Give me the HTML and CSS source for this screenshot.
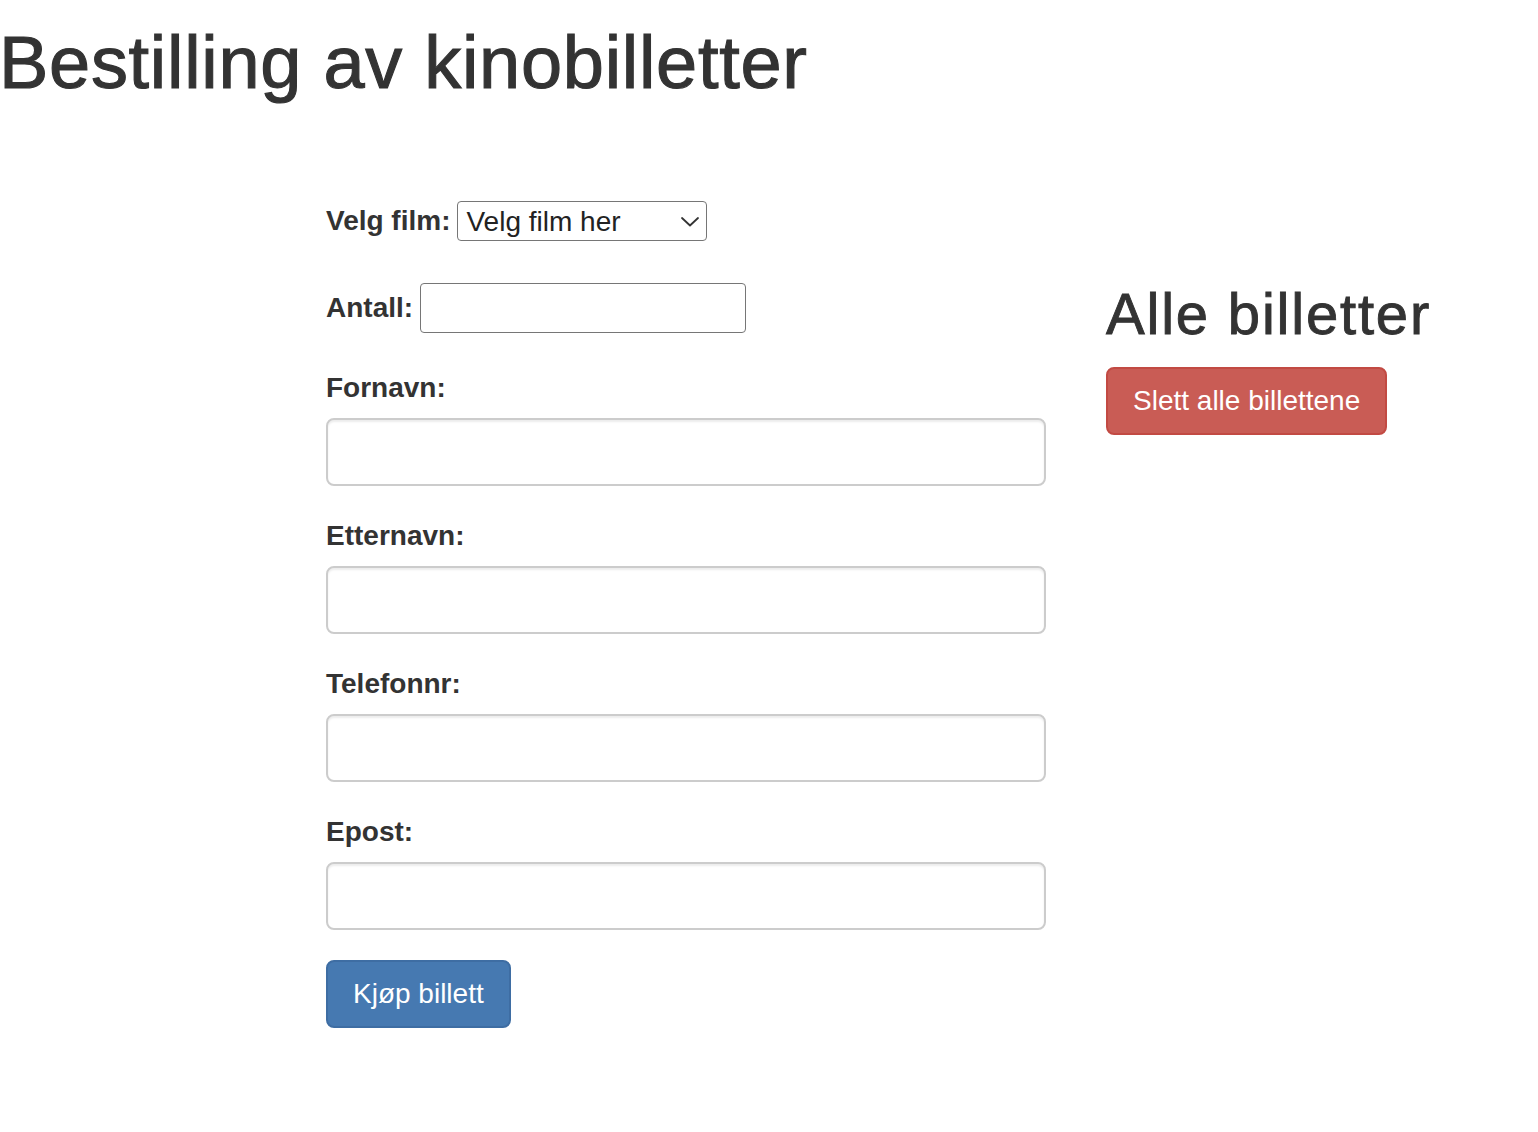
FILE: index.html
```html
<!DOCTYPE html>
<html lang="no">
<head>
<meta charset="utf-8">
<title>Bestilling av kinobilletter</title>
<link rel="stylesheet" href="styles.css">
</head>
<body>
<h1 class="title">Bestilling av kinobilletter</h1>
<div class="layout">
  <form class="order">
    <div class="inline-row row-film">
      <label class="inline-label" for="film">Velg film:</label>
      <div class="select-wrap">
        <select id="film" class="film-select">
          <option>Velg film her</option>
        </select>
        <svg class="chevron" width="18" height="10" viewBox="0 0 18 10" aria-hidden="true">
          <path d="M1 1 L9 8.5 L17 1" fill="none" stroke="#333" stroke-width="1.8" stroke-linecap="round" stroke-linejoin="round"/>
        </svg>
      </div>
    </div>
    <div class="inline-row row-antall">
      <label class="inline-label" for="antall">Antall:</label>
      <input id="antall" class="small-input" type="text">
    </div>
    <div class="group">
      <label for="fornavn">Fornavn:</label>
      <input id="fornavn" class="form-control" type="text">
    </div>
    <div class="group">
      <label for="etternavn">Etternavn:</label>
      <input id="etternavn" class="form-control" type="text">
    </div>
    <div class="group">
      <label for="telefonnr">Telefonnr:</label>
      <input id="telefonnr" class="form-control" type="text">
    </div>
    <div class="group">
      <label for="epost">Epost:</label>
      <input id="epost" class="form-control" type="text">
    </div>
    <button type="button" class="btn btn-primary">Kjøp billett</button>
  </form>
  <aside class="tickets">
    <h2 class="tickets-title">Alle billetter</h2>
    <button type="button" class="btn btn-danger">Slett alle billettene</button>
  </aside>
</div>
</body>
</html>
```
FILE: styles.css
```css
* { box-sizing: border-box; }

html, body {
  margin: 0;
  padding: 0;
  background: #fff;
}

body {
  font-family: "Liberation Sans", Arial, Helvetica, sans-serif;
  color: #333;
  font-size: 28px;
  line-height: 40px;
}

.title {
  margin: 23px 0 0 -1px;
  font-size: 74px;
  line-height: 79px;
  font-weight: 500;
  letter-spacing: 0.7px;
  -webkit-text-stroke: 1.1px #333;
}

.layout {
  display: flex;
  align-items: flex-start;
  gap: 60px;
  padding-left: 326px;
  margin-top: 99px;
}

.order {
  width: 720px;
  display: flex;
  flex-direction: column;
  align-items: flex-start;
}

.inline-row {
  display: flex;
  align-items: center;
  gap: 7px;
}

.inline-label, .group label {
  font-weight: bold;
  font-size: 28px;
  line-height: 40px;
  display: block;
}

.select-wrap {
  position: relative;
  width: 250px;
  height: 40px;
}

.film-select {
  appearance: none;
  -webkit-appearance: none;
  width: 250px;
  height: 40px;
  margin: 0;
  padding: 2px 36px 0 8px;
  border: 1px solid #767676;
  border-radius: 4px;
  background: #fff;
  color: #222;
  font-family: "Liberation Sans", Arial, Helvetica, sans-serif;
  font-size: 28px;
  line-height: 36px;
}

.chevron {
  position: absolute;
  right: 8px;
  top: 16px;
  pointer-events: none;
}

.row-antall {
  margin-top: 42px;
}

.small-input {
  width: 326px;
  height: 50px;
  margin: 0;
  border: 1px solid #767676;
  border-radius: 4px;
  background: #fff;
  font-size: 28px;
  padding: 0 8px;
}

.group {
  width: 720px;
  margin-bottom: 30px;
}

.row-antall + .group {
  margin-top: 35px;
}

.group label {
  margin-bottom: 10px;
}

.form-control {
  display: block;
  width: 720px;
  height: 68px;
  margin: 0;
  padding: 12px 24px;
  border: 2px solid #ccc;
  border-radius: 8px;
  background: #fff;
  box-shadow: inset 0 2px 2px rgba(0, 0, 0, 0.075);
  font-size: 28px;
  font-family: "Liberation Sans", Arial, Helvetica, sans-serif;
}

.btn {
  display: inline-block;
  margin: 0;
  padding: 12px 25px;
  border: 2px solid transparent;
  border-radius: 8px;
  font-family: "Liberation Sans", Arial, Helvetica, sans-serif;
  font-size: 28px;
  line-height: 40px;
  color: #fff;
  cursor: pointer;
  white-space: nowrap;
}

.btn-primary {
  background: #4679b1;
  border-color: #3e6da3;
}

.btn-danger {
  background: #c95c55;
  border-color: #c24a43;
}

.tickets {
  margin-top: 81px;
}

.tickets-title {
  margin: 0 0 21px 0;
  font-size: 58px;
  line-height: 64px;
  font-weight: 500;
  letter-spacing: 1.8px;
  -webkit-text-stroke: 0.9px #333;
}
```
